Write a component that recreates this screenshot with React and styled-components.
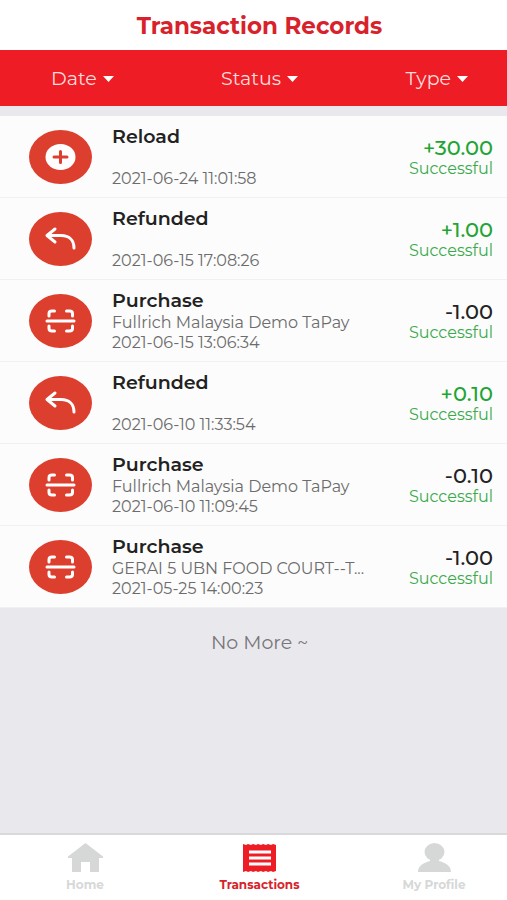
import styled, { createGlobalStyle } from "styled-components";

const records = [
  { type: "Reload", date: "2021-06-24 11:01:58", amount: "+30.00" },
  { type: "Refunded", date: "2021-06-15 17:08:26", amount: "+1.00" },
  {
    type: "Purchase",
    merchant: "Fullrich Malaysia Demo TaPay",
    date: "2021-06-15 13:06:34",
    amount: "-1.00",
  },
  { type: "Refunded", date: "2021-06-10 11:33:54", amount: "+0.10" },
  {
    type: "Purchase",
    merchant: "Fullrich Malaysia Demo TaPay",
    date: "2021-06-10 11:09:45",
    amount: "-0.10",
  },
  {
    type: "Purchase",
    merchant: "GERAI 5 UBN FOOD COURT--T...",
    date: "2021-05-25 14:00:23",
    amount: "-1.00",
  },
];

function RecordIcon({ type }) {
  return (
    <Badge viewBox="0 0 63 54" aria-hidden="true">
      <ellipse cx="31.5" cy="27" rx="31.5" ry="27" fill="#dc3f2e" />
      {type === "Reload" && (
        <>
          <ellipse cx="31.5" cy="27" rx="15" ry="13" fill="#fff" />
          <path d="M25 27H38M31.5 21.5V32.5" stroke="#dc3f2e" />
        </>
      )}
      {type === "Refunded" && (
        <path d="M26 17L18 23.5L26 30M18.5 23.5H32C40 23.5 45 28 45 36" />
      )}
      {type === "Purchase" && (
        <path d="M20 22V19.5Q20 17 23 17H25.5M37.5 17H40.5Q43.5 17 43.5 19.5V22M43.5 32V34.5Q43.5 37 40.5 37H37.5M25.5 37H23Q20 37 20 34.5V32M18 27H45" />
      )}
    </Badge>
  );
}

function App() {
  return (
    <Page>
      <GlobalStyle />
      <Header>
        <h1>Transaction Records</h1>
      </Header>

      <Filters>
        {["Date", "Status", "Type"].map((name) => (
          <FilterButton key={name} type="button" aria-haspopup="listbox">
            {name}
            <Caret viewBox="0 0 11 6" aria-hidden="true">
              <path d="M0 0H11L5.5 6Z" />
            </Caret>
          </FilterButton>
        ))}
      </Filters>

      <Content>
        <List>
          {records.map((record) => (
            <Row key={record.date}>
              <RecordIcon type={record.type} />
              <Details>
                <RecordType>{record.type}</RecordType>
                <Line>{record.merchant}</Line>
                <Line>{record.date}</Line>
              </Details>
              <Result>
                <Amount $credit={record.amount.startsWith("+")}>
                  {record.amount}
                </Amount>
                <Status>Successful</Status>
              </Result>
            </Row>
          ))}
        </List>
        <EndText>No More ~</EndText>
      </Content>

      <TabBar>
        <Tab href="#home">
          <TabIcon viewBox="0 0 35 30" aria-hidden="true">
            <path d="M17.5 0L35 13.5V15H31V29H22V19H13V29H4V15H0V13.5Z" />
          </TabIcon>
          Home
        </Tab>
        <Tab href="#transactions" $active aria-current="page">
          <TabIcon $active viewBox="0 0 35 30" aria-hidden="true">
            <path d="M1 1L4 2L6 1L9 2L11 1L14 2L16 1L19 2L21 1L24 2L26 1L29 2L31 1L34 2V28L31 29L29 28L26 29L24 28L21 29L19 28L16 29L14 28L11 29L9 28L6 29L4 28L1 29Z" />
            <path d="M7 9H29M7 15H29M7 21H29" stroke="#fff" strokeWidth="3" />
          </TabIcon>
          Transactions
        </Tab>
        <Tab href="#profile">
          <TabIcon viewBox="0 0 35 30" aria-hidden="true">
            <ellipse cx="17.5" cy="9" rx="10" ry="9" />
            <path d="M13 16H22V18C29 20 34 23 34 29H1C1 23 6 20 13 18Z" />
          </TabIcon>
          My Profile
        </Tab>
      </TabBar>
    </Page>
  );
}

export default App;

const GlobalStyle = createGlobalStyle`
  * {
    box-sizing: border-box;
  }

  body {
    margin: 0;
    font-family: Montserrat, "DejaVu Sans", sans-serif;
  }
`;

const Page = styled.div`
  min-height: 100vh;
  display: flex;
  flex-direction: column;
  background: #e9e8ed;
`;

const Header = styled.header`
  padding: 11px 0 9px 12px;
  background: #fff;
  text-align: center;

  h1 {
    margin: 0;
    font-size: 23px;
    line-height: 30px;
    font-weight: 700;
    color: #d8222b;
  }
`;

const Filters = styled.div`
  display: flex;
  justify-content: space-between;
  padding: 15px 39px 13px 51px;
  background: #ee1c25;
`;

const FilterButton = styled.button`
  display: flex;
  align-items: center;
  gap: 6px;
  padding: 0;
  border: none;
  background: none;
  font-family: inherit;
  font-size: 19px;
  line-height: 28px;
  color: #ffdcdc;
  cursor: pointer;
`;

const Caret = styled.svg`
  width: 11px;
  height: 6px;
  fill: #fff;
`;

const Content = styled.main`
  flex: 1;
  padding-top: 10px;
`;

const List = styled.ul`
  margin: 0;
  padding: 0;
  list-style: none;
`;

const Row = styled.li`
  display: flex;
  align-items: center;
  gap: 20px;
  padding: 9px 14px 8px 29px;
  background: #fcfcfc;
  border-bottom: 1px solid #f1f1f2;
`;

const Badge = styled.svg`
  flex: none;
  width: 63px;
  height: 54px;

  path {
    fill: none;
    stroke: #fff;
    stroke-width: 3;
    stroke-linecap: round;
    stroke-linejoin: round;
  }

  path[stroke] {
    stroke: #dc3f2e;
  }
`;

const Details = styled.div`
  flex: 1;
  min-width: 0;
`;

const RecordType = styled.div`
  font-size: 19px;
  line-height: 24px;
  font-weight: 600;
  color: #222;
`;

const Line = styled.div`
  height: 20px;
  font-size: 16px;
  line-height: 20px;
  color: #6c6c6c;
  white-space: nowrap;
  overflow: hidden;
  text-overflow: ellipsis;
`;

const Result = styled.div`
  padding-top: 2px;
  text-align: right;
`;

const Amount = styled.div`
  font-size: 21px;
  line-height: 22px;
  font-weight: 500;
  color: ${(props) => (props.$credit ? "#1fa534" : "#222")};
`;

const Status = styled.div`
  font-size: 16px;
  line-height: 20px;
  color: #3aaa4b;
`;

const EndText = styled.p`
  margin: 0;
  padding: 23px 0 24px 12px;
  font-size: 19px;
  line-height: 24px;
  text-align: center;
  color: #77767b;
`;

const TabBar = styled.nav`
  display: flex;
  justify-content: space-between;
  padding: 8px 32px 7px 44px;
  border-top: 2px solid #d9d9dc;
  background: #fff;
`;

const Tab = styled.a`
  width: 82px;
  display: flex;
  flex-direction: column;
  align-items: center;
  gap: 4px;
  font-size: 12px;
  line-height: 16px;
  font-weight: 700;
  white-space: nowrap;
  text-decoration: none;
  color: ${(props) => (props.$active ? "#d8222b" : "#d6d8d8")};
`;

const TabIcon = styled.svg`
  width: 35px;
  height: 30px;
  fill: ${(props) => (props.$active ? "#ee1c25" : "currentColor")};
`;
